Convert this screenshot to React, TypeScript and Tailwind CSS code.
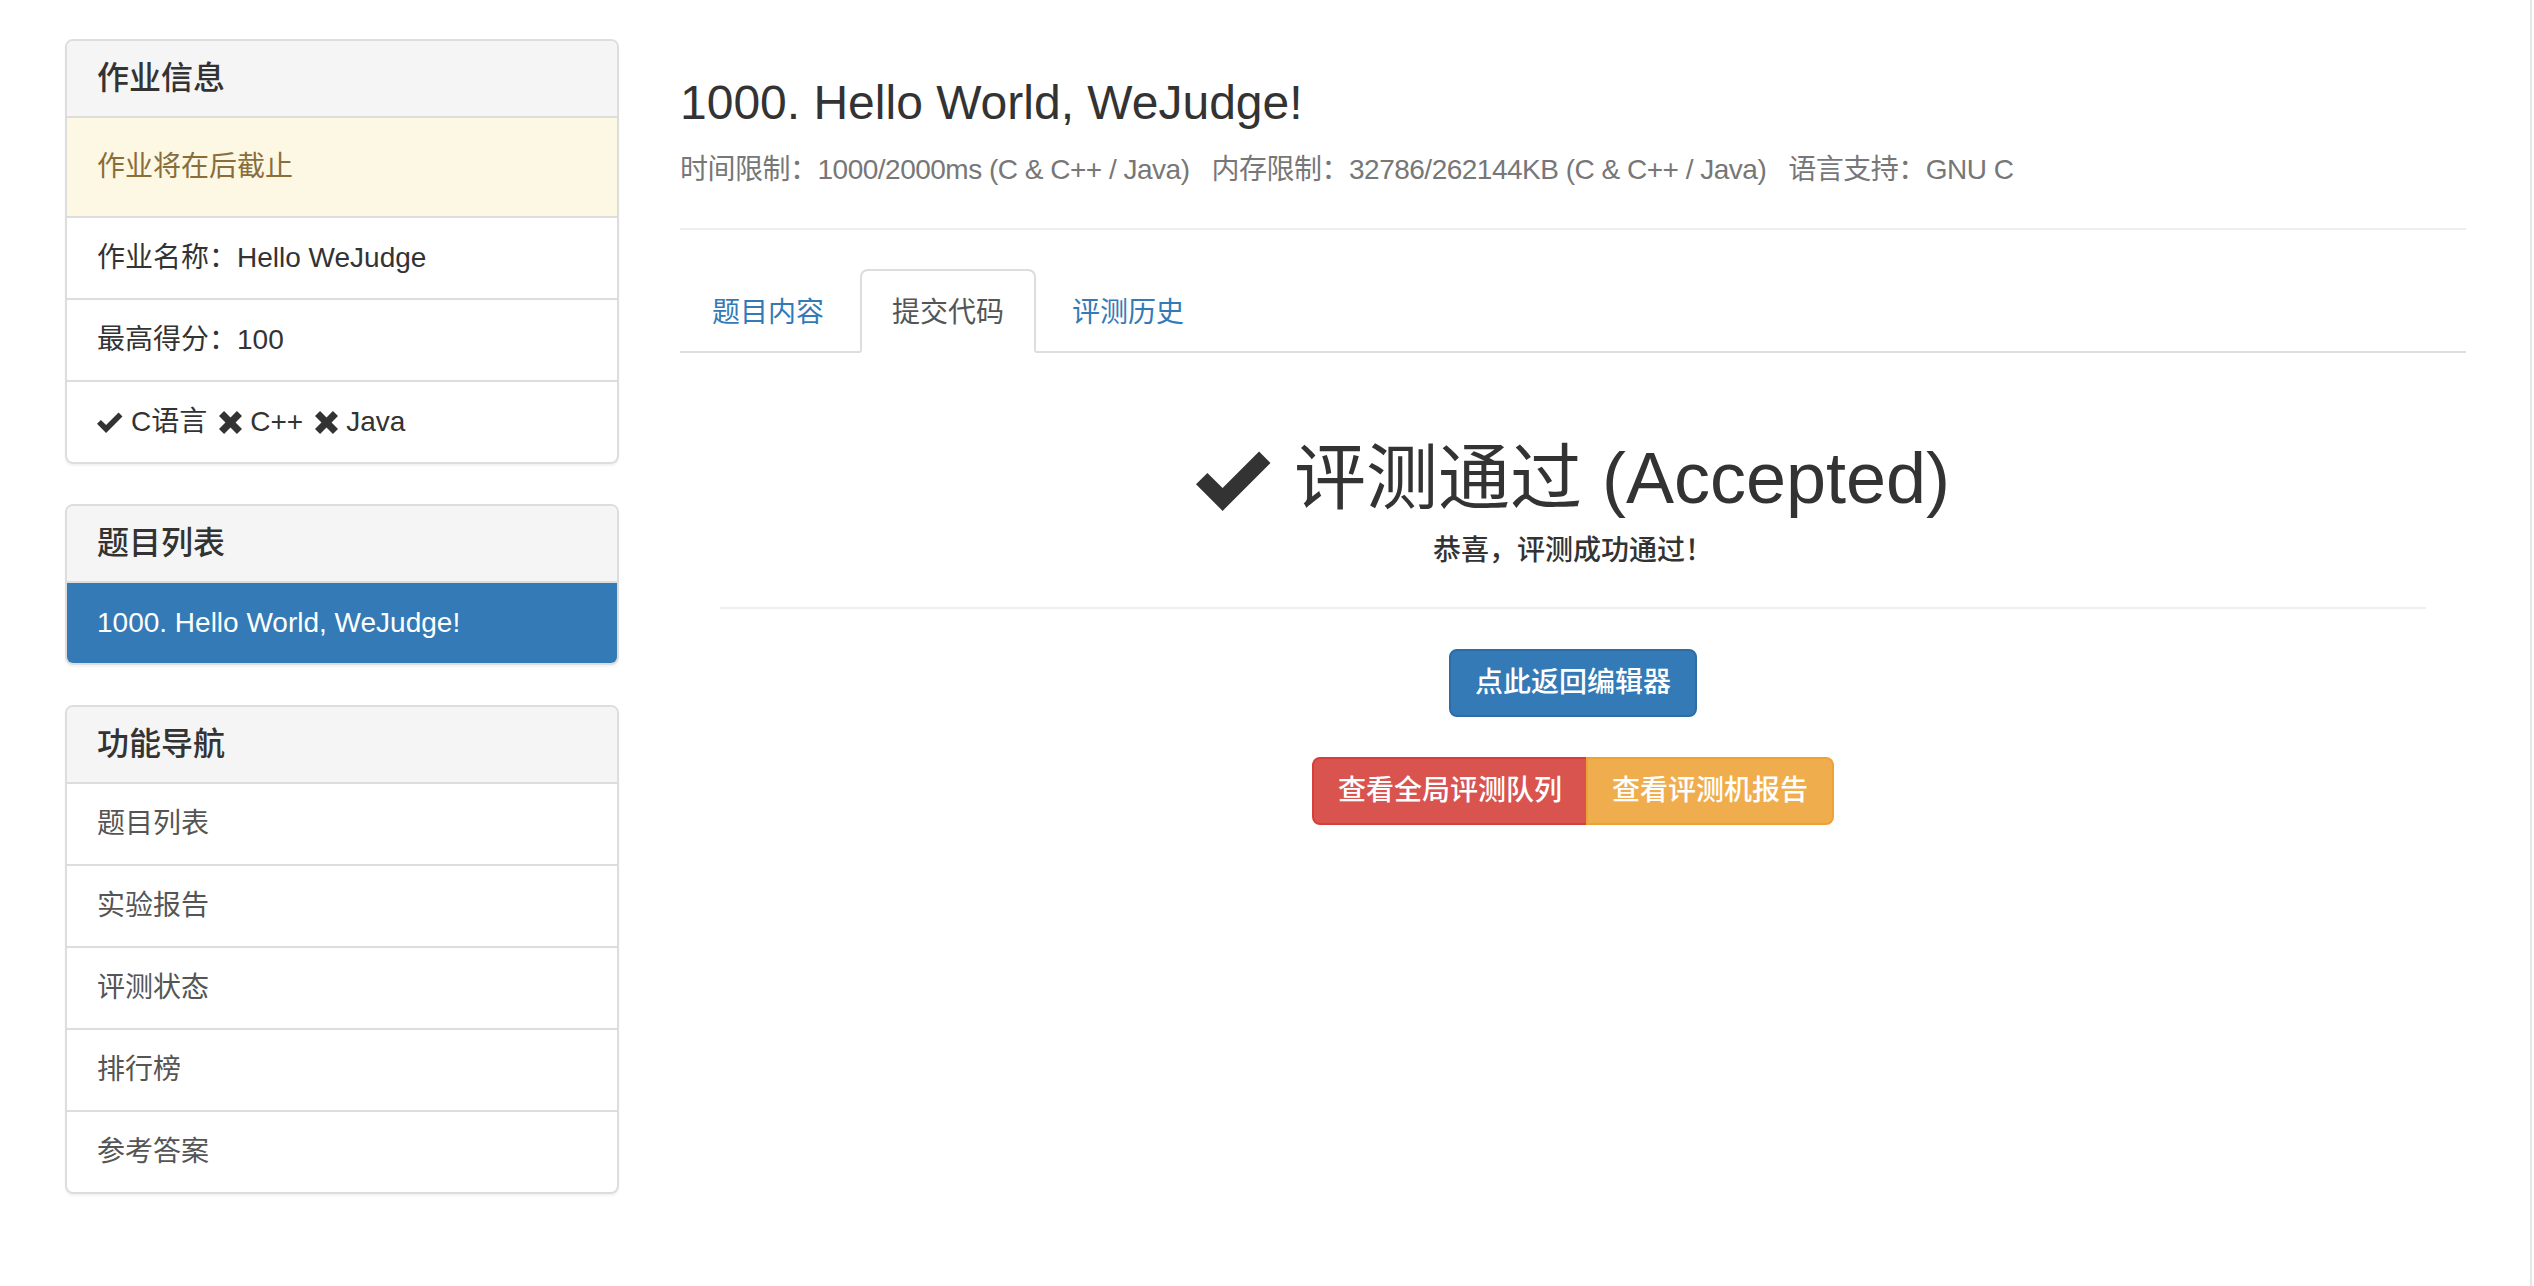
import React from 'react';

const FONT = "font-['Liberation_Sans','Noto_Sans_CJK_SC',sans-serif]";

function OkIcon({ className }: { className?: string }) {
  return (
    <svg viewBox="0 0 100 80" className={className} fill="currentColor">
      <polygon points="0,45 15,30 35,50 83,2 98,17 35,80" />
    </svg>
  );
}

function RemoveIcon({ className }: { className?: string }) {
  return (
    <svg viewBox="0 0 100 100" className={className} fill="currentColor">
      <polygon points="0,22 22,0 50,28 78,0 100,22 72,50 100,78 78,100 50,72 22,100 0,78 28,50" />
    </svg>
  );
}

function PanelHeading({ children }: { children: React.ReactNode }) {
  return (
    <div className="bg-[#f5f5f5] border-b-2 border-[#ddd] px-[30px] py-[20px] rounded-t-[6px]">
      <h3 className="text-[32px] leading-[35px] font-medium text-[#333]">{children}</h3>
    </div>
  );
}

export default function App() {
  const navItems = ['题目列表', '实验报告', '评测状态', '排行榜', '参考答案'];

  return (
    <div className={`${FONT} min-h-screen flex bg-white text-[#333]`}>
      <div className="w-[65px] shrink-0" />

      {/* Sidebar */}
      <aside className="w-[554px] shrink-0 pt-[39px]">
        <div className="border-2 border-[#ddd] rounded-[8px] shadow-[0_2px_2px_rgba(0,0,0,0.05)] mb-[40px] overflow-hidden">
          <PanelHeading>作业信息</PanelHeading>
          <div className="bg-[#fcf8e3] text-[#8a6d3b] px-[30px] py-[29px] text-[28px] leading-[40px] border-b-2 border-[#ddd]">
            作业将在后截止
          </div>
          <div className="px-[30px] py-[20px] text-[28px] leading-[40px] border-b-2 border-[#ddd]">
            作业名称：Hello WeJudge
          </div>
          <div className="px-[30px] py-[20px] text-[28px] leading-[40px] border-b-2 border-[#ddd]">
            最高得分：100
          </div>
          <div className="px-[30px] py-[20px] text-[28px] leading-[40px] flex items-center gap-[8px] whitespace-nowrap">
            <OkIcon className="w-[26px] h-[21px]" />
            <span>C语言</span>
            <RemoveIcon className="w-[23px] h-[23px] ml-[4px]" />
            <span>C++</span>
            <RemoveIcon className="w-[23px] h-[23px] ml-[4px]" />
            <span>Java</span>
          </div>
        </div>

        <div className="border-2 border-[#ddd] rounded-[8px] shadow-[0_2px_2px_rgba(0,0,0,0.05)] mb-[40px] overflow-hidden">
          <PanelHeading>题目列表</PanelHeading>
          <div className="bg-[#337ab7] text-white px-[30px] py-[20px] text-[28px] leading-[40px]">
            1000. Hello World, WeJudge!
          </div>
        </div>

        <div className="border-2 border-[#ddd] rounded-[8px] shadow-[0_2px_2px_rgba(0,0,0,0.05)] overflow-hidden">
          <PanelHeading>功能导航</PanelHeading>
          {navItems.map((item, idx) => (
            <div
              key={idx}
              className={`px-[30px] py-[20px] text-[28px] leading-[40px] text-[#555] ${
                idx < navItems.length - 1 ? 'border-b-2 border-[#ddd]' : ''
              }`}
            >
              {item}
            </div>
          ))}
        </div>
      </aside>

      <div className="w-[61px] shrink-0" />

      {/* Main */}
      <main className="w-[1786px] shrink-0 pt-[76px]">
        <h3 className="text-[48px] leading-[53px] text-[#333]">1000. Hello World, WeJudge!</h3>
        <div className="mt-[21px] text-[28px] leading-[40px] text-[#777] whitespace-nowrap tracking-[-0.5px]">
          <span className="mr-[22px]">时间限制：1000/2000ms (C &amp; C++ / Java)</span>
          <span className="mr-[22px]">内存限制：32786/262144KB (C &amp; C++ / Java)</span>
          <span>语言支持：GNU C</span>
        </div>
        <div className="mt-[38px] border-t-2 border-[#eee]" />

        {/* Tabs */}
        <ul className="mt-[39px] flex border-b-2 border-[#ddd] text-[28px] leading-[40px]">
          <li className="-mb-[2px] mr-[4px]">
            <a className="block px-[30px] pt-[22px] pb-[18px] border-2 border-transparent rounded-t-[8px] text-[#337ab7]">
              题目内容
            </a>
          </li>
          <li className="-mb-[2px] mr-[4px]">
            <a className="block px-[30px] pt-[22px] pb-[18px] border-2 border-[#ddd] border-b-white bg-white rounded-t-[8px] text-[#555]">
              提交代码
            </a>
          </li>
          <li className="-mb-[2px] mr-[4px]">
            <a className="block px-[30px] pt-[22px] pb-[18px] border-2 border-transparent rounded-t-[8px] text-[#337ab7]">
              评测历史
            </a>
          </li>
        </ul>

        {/* Result */}
        <div className="px-[40px] flex flex-col items-center text-center">
          <h1 className="mt-[86px] text-[72px] leading-[79px] text-[#333] whitespace-nowrap flex items-center">
            <OkIcon className="w-[76px] h-[61px] mr-[22px] mt-[4px]" />
            <span>评测通过 (Accepted)</span>
          </h1>
          <h5 className="mt-[13px] text-[28px] leading-[40px] font-medium text-[#333]">恭喜，评测成功通过！</h5>
          <div className="mt-[36px] w-full border-t-2 border-[#eee]" />

          <button className="mt-[40px] px-[24px] py-[12px] text-[28px] leading-[40px] font-medium text-white bg-[#337ab7] border-2 border-[#2e6da4] rounded-[8px]">
            点此返回编辑器
          </button>

          <div className="mt-[40px] flex">
            <button className="px-[24px] py-[12px] text-[28px] leading-[40px] font-medium text-white bg-[#d9534f] border-2 border-[#d43f3a] rounded-l-[8px]">
              查看全局评测队列
            </button>
            <button className="-ml-[2px] px-[24px] py-[12px] text-[28px] leading-[40px] font-medium text-white bg-[#f0ad4e] border-2 border-[#eea236] rounded-r-[8px]">
              查看评测机报告
            </button>
          </div>
        </div>
      </main>

      <div className="flex-1" />
      <div className="w-[4px] shrink-0 border-l-2 border-[#e6e6e6]" />
    </div>
  );
}
